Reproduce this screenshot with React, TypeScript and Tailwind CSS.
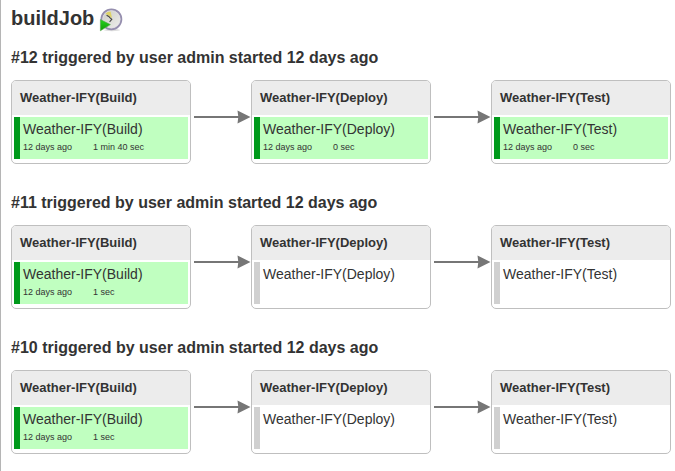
type Task = { stage: string; duration?: string };
type Run = { id: number; tasks: Task[] };

const runs: Run[] = [
  {
    id: 12,
    tasks: [
      { stage: 'Build', duration: '1 min 40 sec' },
      { stage: 'Deploy', duration: '0 sec' },
      { stage: 'Test', duration: '0 sec' },
    ],
  },
  { id: 11, tasks: [{ stage: 'Build', duration: '1 sec' }, { stage: 'Deploy' }, { stage: 'Test' }] },
  { id: 10, tasks: [{ stage: 'Build', duration: '1 sec' }, { stage: 'Deploy' }, { stage: 'Test' }] },
];

function ClockIcon() {
  return (
    <svg width="26" height="26" viewBox="0 0 26 26" className="shrink-0" aria-hidden="true">
      <defs>
        <linearGradient id="face" x1="0" y1="0" x2="1" y2="1">
          <stop offset="0" stopColor="#c9cac2" />
          <stop offset="1" stopColor="#f0f0ee" />
        </linearGradient>
        <linearGradient id="play" x1="0" y1="0" x2="0" y2="1">
          <stop offset="0" stopColor="#25d41f" />
          <stop offset="1" stopColor="#129a08" />
        </linearGradient>
      </defs>
      <ellipse cx="14" cy="23" rx="8" ry="1.2" fill="#dedede" />
      <circle cx="13.4" cy="12.3" r="9.9" fill="url(#face)" stroke="#958eae" strokeWidth="2" />
      <circle cx="13.4" cy="12.3" r="8.7" fill="none" stroke="#e2e1e6" strokeWidth=".8" />
      <path d="M14 11 7.4 6.6A8.6 8.6 0 0 1 12.6 4.6Z" fill="#ddd367" />
      <path d="m8.6 8.2 3 1.8M11.2 10.2l2.6 2.2-2.2 2.4" stroke="#444" strokeWidth="1.1" fill="none" />
      <path d="M2.4 12.6 12.4 17.6 2.4 23.8Z" fill="url(#play)" stroke="#55a84d" strokeWidth=".6" />
    </svg>
  );
}

function Arrow() {
  return (
    <svg width="60" height="16" viewBox="0 0 60 16" className="-mt-[10px] shrink-0" aria-hidden="true">
      <path d="M3 8H50" stroke="#767676" strokeWidth="2" />
      <path d="M59.5 8 46.5 1.5 47.3 8 46.5 14.5Z" fill="#767676" />
    </svg>
  );
}

function Card({ stage, duration }: Task) {
  const name = `Weather-IFY(${stage})`;
  return (
    <div className="h-[84px] w-[180px] shrink-0 overflow-hidden rounded-[5px] border border-[#bfbfbf] bg-white">
      <div className="h-[34px] bg-[#ececec] pl-2 text-[13px] leading-[33px] font-bold">{name}</div>
      <div
        className={`mx-0.5 mt-0.5 h-[42px] border-l-[6px] pl-[3px] ${
          duration ? 'border-[#009a1b] bg-[#c0ffc0]' : 'border-[#d0d0d0]'
        }`}
      >
        <div className="h-6 text-[14px] leading-6">{name}</div>
        {duration && (
          <div className="flex text-[9px] leading-3">
            <span className="w-[70px]">12 days ago</span>
            <span>{duration}</span>
          </div>
        )}
      </div>
    </div>
  );
}

export default function App() {
  return (
    <main className="h-[471px] w-[675px] overflow-hidden border-l border-[#b5b5b5] bg-white pl-[10px] font-['Liberation_Sans',Arial,sans-serif] text-[#333]">
      <header className="flex h-9 items-center gap-1 pt-1">
        <h1 className="pb-1 text-[20px] leading-6 font-bold">buildJob</h1>
        <ClockIcon />
      </header>
      {runs.map((run) => (
        <section key={run.id} className="h-[145px] pt-3">
          <h2 className="mb-3 text-[16px] leading-5 font-bold">
            #{run.id} triggered by user admin started 12 days ago
          </h2>
          <div className="flex items-center">
            {run.tasks.map((task, i) => (
              <div key={task.stage} className="flex items-center">
                {i > 0 && <Arrow />}
                <Card {...task} />
              </div>
            ))}
          </div>
        </section>
      ))}
    </main>
  );
}
